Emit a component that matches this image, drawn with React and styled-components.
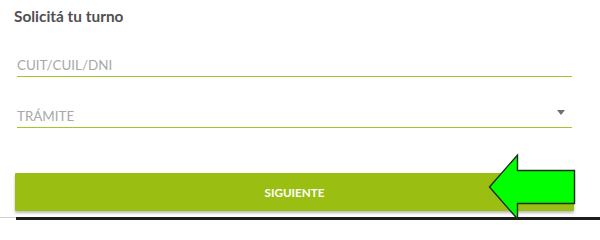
import styled, { createGlobalStyle } from "styled-components";

const GlobalStyle = createGlobalStyle`
  body {
    margin: 0;
    background: #fff;
    font-family: Lato, "Liberation Sans", sans-serif;
  }
`;

const Page = styled.div`
  position: relative;
  width: 600px;
  height: 220px;
  overflow: hidden;
`;

const Form = styled.form`
  display: flex;
  flex-direction: column;
  padding: 6px 26px 0 15px;
`;

const Title = styled.h2`
  margin: 0 0 0 -1px;
  font-size: 15.4px;
  line-height: 20px;
  font-weight: 700;
  color: #505050;
`;

const Field = styled.div`
  display: flex;
  align-items: flex-end;
  justify-content: space-between;
  margin: ${(p) => p.$top}px 2px 0;
  height: 26px;
  padding-bottom: 2px;
  border-bottom: 1px solid #9fc62a;
`;

const Input = styled.input`
  flex: 1;
  height: 17px;
  border: none;
  outline: none;
  padding: 0;
  font-family: inherit;
  font-size: 13.4px;
  line-height: 17px;
  color: #333;
  background: transparent;
  &::placeholder {
    color: #a8a8a8;
  }
`;

const SelectLabel = styled.span`
  font-size: 13.4px;
  line-height: 17px;
  color: #a8a8a8;
`;

const Caret = styled.span`
  width: 0;
  height: 0;
  margin: 0 7px 10px 0;
  border-left: 4.5px solid transparent;
  border-right: 4.5px solid transparent;
  border-top: 5px solid #6f6f6f;
`;

const Submit = styled.button`
  margin-top: 45px;
  height: 38px;
  border: none;
  border-radius: 1px;
  background: #9abf12;
  color: #fff;
  font-family: inherit;
  font-size: 11.7px;
  font-weight: 700;
  box-shadow: 0 2px 3px rgba(0, 0, 0, 0.28);
  cursor: pointer;
`;

const Strip = styled.div`
  position: absolute;
  left: 0;
  right: 0;
  bottom: 0;
  height: 3px;
  display: flex;
  &::before {
    content: "";
    width: 16px;
    border-top: 1px solid #cfcfcf;
  }
  &::after {
    content: "";
    flex: 1;
    background: #1d1d1d;
  }
`;

const Arrow = styled.svg`
  position: absolute;
  left: 0;
  top: 0;
  pointer-events: none;
`;

export default function App() {
  return (
    <Page>
      <GlobalStyle />
      <Form onSubmit={(e) => e.preventDefault()}>
        <Title>Solicitá tu turno</Title>
        <Field $top={22}>
          <Input placeholder="CUIT/CUIL/DNI" />
        </Field>
        <Field $top={22}>
          <SelectLabel>TRÁMITE</SelectLabel>
          <Caret />
        </Field>
        <Submit type="submit">SIGUIENTE</Submit>
      </Form>
      <Strip />
      <Arrow width="600" height="220" viewBox="0 0 600 220">
        <polygon
          points="489.5,187 517.5,155 517.5,170.5 574.5,170.5 574.5,203.5 517.5,203.5 517.5,219"
          fill="#00ff00"
          stroke="#1e2a1e"
          strokeWidth="1.4"
          strokeLinejoin="miter"
        />
      </Arrow>
    </Page>
  );
}
